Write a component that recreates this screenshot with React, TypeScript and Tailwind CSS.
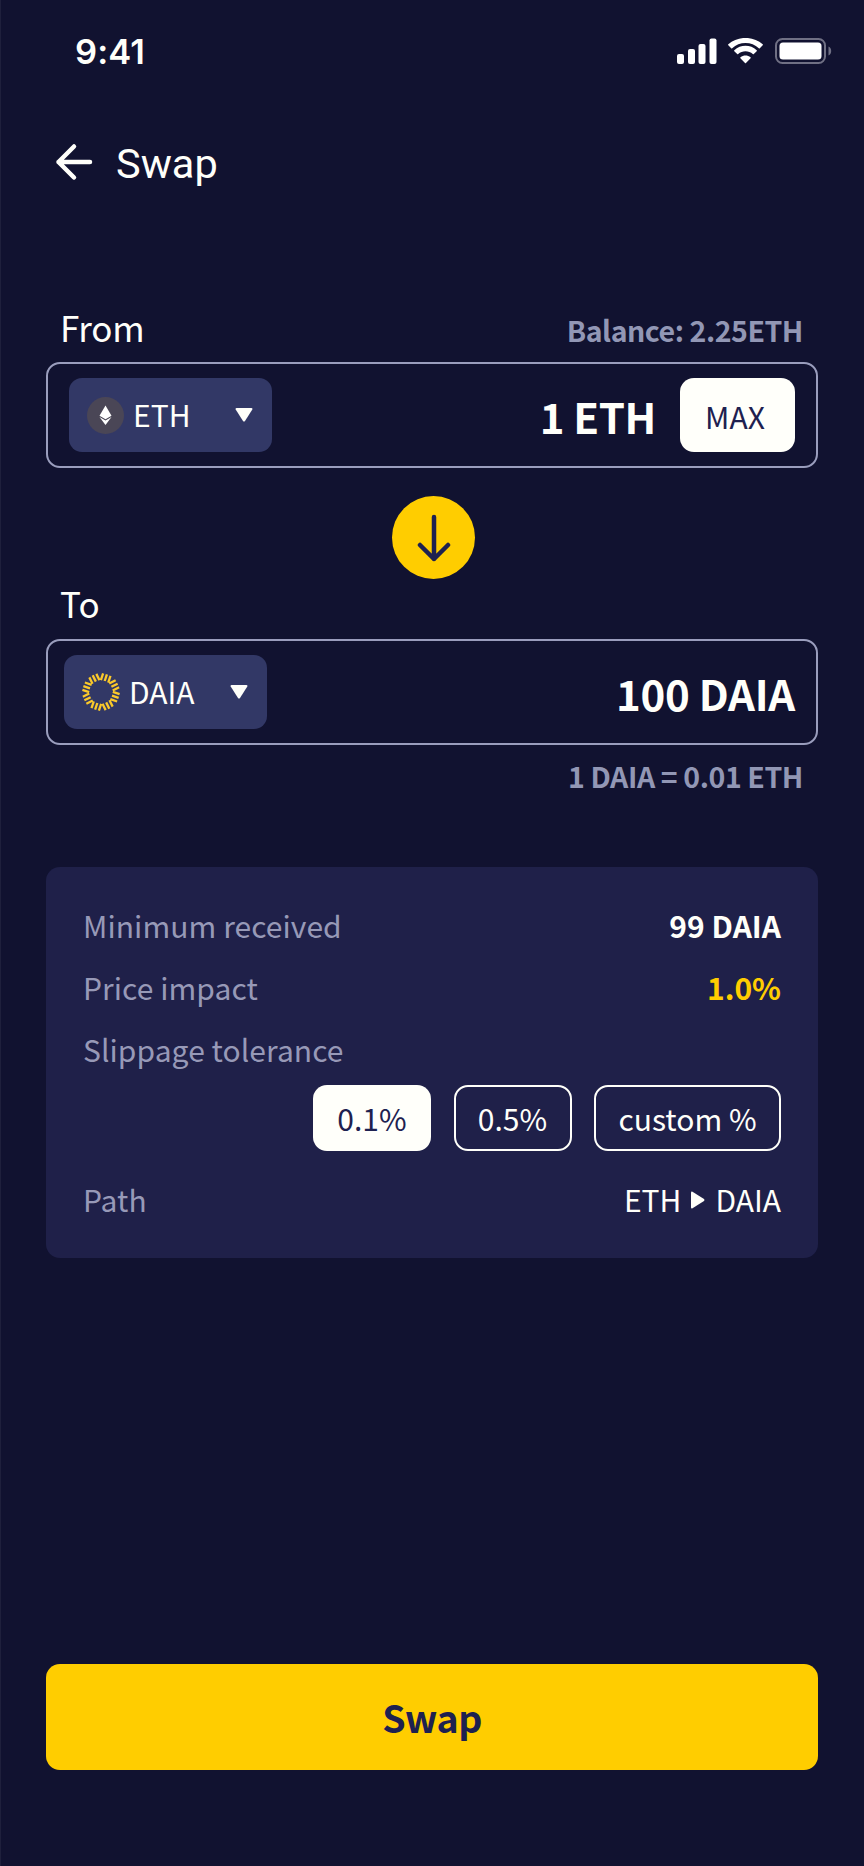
import React from "react";

const DAIA_RAYS = [0, 45, 90, 135, 180, 225, 270, 315];

function StatusBar() {
  return (
    <div className="flex h-[104px] items-center justify-between pl-[75px] pr-[32px]">
      <span className="font-['Inter'] text-[34.500px] font-semibold leading-[40px] tracking-[0.1px]">9:41</span>
      <svg width="155" height="28" viewBox="0 0 155 28" fill="#fff" aria-hidden="true">
        <rect x="0" y="16" width="7" height="10" rx="2" />
        <rect x="11" y="11" width="7" height="15" rx="2" />
        <rect x="21.500" y="6" width="7" height="20" rx="2" />
        <rect x="32.500" y="0.500" width="7" height="25.500" rx="2" />
        <path d="M68.500 4.900C73.500 4.900 78.200 6.800 81.800 10.200Q82.300 10.600 82.800 10.200L85.700 7.300Q86.200 6.800 85.700 6.200C76.100-2.200 60.900-2.200 51.300 6.200Q50.800 6.800 51.300 7.300L54.200 10.200Q54.700 10.600 55.200 10.200C58.800 6.800 63.500 4.900 68.500 4.900Z" />
        <path d="M68.500 13.300C71.200 13.300 73.800 14.300 75.800 16.100Q76.300 16.600 76.800 16.100L79.700 13.200Q80.200 12.700 79.700 12.200C73.400 6.400 63.600 6.400 57.300 12.200Q56.800 12.700 57.300 13.200L60.200 16.100Q60.700 16.600 61.200 16.100C63.200 14.300 65.800 13.300 68.500 13.300Z" />
        <path d="M73.600 20.300Q74.100 19.800 73.500 19.300C70.600 16.900 66.400 16.900 63.500 19.300Q62.900 19.800 63.400 20.300L68 25.100Q68.500 25.600 69 25.100Z" />
        <rect x="99" y="1" width="49" height="24" rx="6.500" fill="none" stroke="#707084" strokeWidth="2" />
        <rect x="102.500" y="4.500" width="42" height="17" rx="3.500" />
        <path d="M151.500 8.500C153.300 9.300 154.200 11 154.200 13S153.300 16.700 151.500 17.500Z" fill="#707084" />
      </svg>
    </div>
  );
}

function EthIcon() {
  return (
    <svg className="shrink-0" width="37" height="37" viewBox="0 0 37 37" aria-hidden="true">
      <circle cx="18.500" cy="18.500" r="18.500" fill="#4a4656" />
      <path d="M18.500 8.500L24.500 18.800L18.500 22.300L12.500 18.800Z" fill="#fff" />
      <path d="M12.500 20L18.500 23.500L24.500 20L18.500 28Z" fill="#fff" />
    </svg>
  );
}

function DaiaIcon() {
  return (
    <svg className="shrink-0" width="38" height="38" viewBox="-19 -19 38 38" aria-hidden="true">
      <g fill="none" stroke="#fbc92a" strokeWidth="2.300">
        {DAIA_RAYS.map((angle) => (
          <path key={angle} d="M-3.400-18.400L-0.700-11.800M3.400-18.400L0.700-11.800" transform={`rotate(${angle - 4})`} />
        ))}
        {DAIA_RAYS.map((angle) => (
          <path key={angle} d="M0-18.600V-11.600" transform={`rotate(${angle + 18.5})`} />
        ))}
      </g>
    </svg>
  );
}

function TokenSelect({ icon, name }: { icon: React.ReactNode; name: string }) {
  return (
    <button className="flex h-[74px] w-[203px] items-center rounded-[13px] bg-[#323866] pl-[18px] pr-[19px]">
      {icon}
      <span className="ml-[9px] grow pb-[2px] text-left text-[30px] leading-[40px]">{name}</span>
      <svg width="18" height="14" viewBox="0 0 18 14" fill="#fffffa" aria-hidden="true">
        <path d="M1.500 0H16.500Q18 0.200 17.300 1.500L10 13Q9 14 8 13L0.700 1.500Q0 0.200 1.500 0Z" />
      </svg>
    </button>
  );
}

function Row({ label, children }: { label: string; children?: React.ReactNode }) {
  return (
    <div className="flex h-[62px] items-center justify-between">
      <span className="tracking-[0.060px] text-[#9799b7]">{label}</span>
      {children}
    </div>
  );
}

export default function App() {
  return (
    <main className="flex h-[1866px] w-[864px] flex-col bg-[#111230] font-['Noto_Sans_CJK_SC',sans-serif] text-[#fffffa] shadow-[inset_1px_0_0_#1f203c]">
      <StatusBar />

      <header className="flex h-[116px] items-center gap-[23px] pl-[55px]">
        <svg width="38" height="38" viewBox="0 0 38 38" fill="none" stroke="#fffffa" strokeWidth="4.500" strokeLinecap="round" strokeLinejoin="round" aria-hidden="true">
          <path d="M35 19H3.500M19 3.500L3.500 19L19 34.500" />
        </svg>
        <h1 className="pt-[3px] font-['Roboto'] text-[41.500px] leading-[48px]">Swap</h1>
      </header>

      <div className="flex grow flex-col px-[46px]">
        <div className="mt-[81px] flex h-[61px] items-baseline justify-between pl-[14px] pr-[15px]">
          <label className="text-[35px] leading-[52px] tracking-[-0.2px]">From</label>
          <span className="text-[28.500px] font-bold leading-[40px] tracking-[-0.450px] text-[#9297b5]">Balance: 2.25ETH</span>
        </div>
        <section className="flex h-[106px] items-center rounded-[14px] border-2 border-[#9a9dbd] pl-[21px] pr-[21px]">
          <TokenSelect icon={<EthIcon />} name="ETH" />
          <span className="ml-auto pt-[2px] text-[42px] font-bold leading-[60px] tracking-[-0.4px]">1 ETH</span>
          <button className="ml-[24px] h-[74px] w-[115px] rounded-[14px] bg-[#fffffa] pr-[5px] pt-[2px] text-[30px] leading-[40px] text-[#1e2150]">MAX</button>
        </section>

        <button className="ml-[346px] mt-[28px] flex size-[83px] items-center justify-center rounded-full bg-[#ffcd00]">
          <svg width="34" height="48" viewBox="0 0 34 48" fill="none" stroke="#1e2150" strokeWidth="4.500" strokeLinecap="round" strokeLinejoin="round" aria-hidden="true">
            <path d="M17 3V45M3 31L17 45L31 31" />
          </svg>
        </button>

        <label className="h-[60px] pl-[14px] text-[35px] leading-[48px]">To</label>
        <section className="flex h-[106px] items-center justify-between rounded-[14px] border-2 border-[#9a9dbd] pl-[16px] pr-[21px]">
          <TokenSelect icon={<DaiaIcon />} name="DAIA" />
          <span className="pt-[1px] text-[42px] font-bold leading-[60px] tracking-[-0.250px]">100 DAIA</span>
        </section>
        <p className="mt-[11px] pr-[15px] text-right text-[28.500px] font-bold leading-[40px] tracking-[-0.420px] text-[#9297b5]">1 DAIA = 0.01 ETH</p>

        <section className="mt-[71px] h-[391px] rounded-[14px] bg-[#1f2049] pl-[37px] pr-[37px] pt-[27px] text-[30px] leading-[40px]">
          <Row label="Minimum received">
            <span className="font-bold">99 DAIA</span>
          </Row>
          <Row label="Price impact">
            <span className="font-bold text-[#ffcd00]">1.0%</span>
          </Row>
          <Row label="Slippage tolerance" />
          <div className="mt-[5px] flex h-[66px] justify-end gap-[22.500px]">
            <button className="w-[118px] rounded-[14px] bg-[#fffffa] text-[#1e2150]">0.1%</button>
            <button className="w-[118px] rounded-[14px] border-2 border-[#fffffa]">0.5%</button>
            <button className="w-[187px] rounded-[14px] border-2 border-[#fffffa]">custom %</button>
          </div>
          <div className="mt-[17px]">
            <Row label="Path">
              <span className="flex items-center">
                ETH
                <svg className="ml-[10px] mr-[10px] mt-[2px]" width="14" height="18" viewBox="0 0 14 18" fill="#fffffa" aria-hidden="true">
                  <path d="M0 1.500Q0.200 0 1.500 0.700L13 8Q14 9 13 10L1.500 17.300Q0.200 18 0 16.500Z" />
                </svg>
                DAIA
              </span>
            </Row>
          </div>
        </section>

        <button className="mb-[96px] mt-auto h-[106px] rounded-[14px] bg-[#ffcd00] text-[37.500px] font-bold leading-[50px] tracking-[-0.5px] text-[#1e2150]">Swap</button>
      </div>
    </main>
  );
}
